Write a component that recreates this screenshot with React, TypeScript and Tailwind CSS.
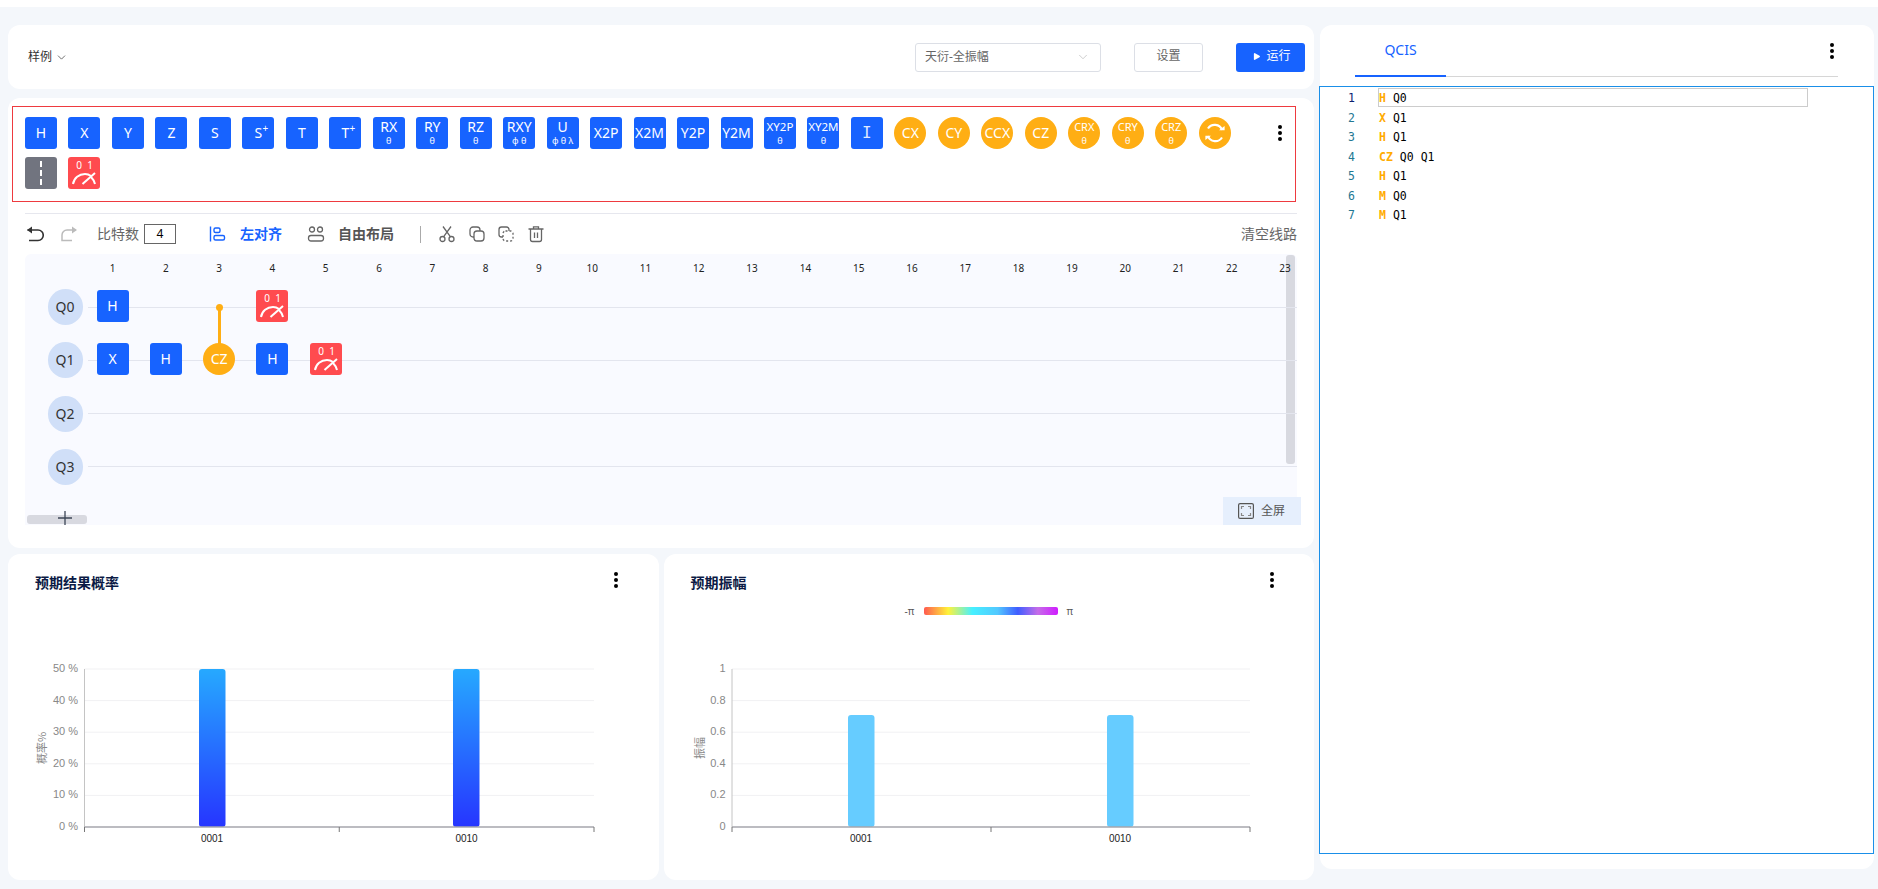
import { ChevronDown, Play } from "lucide-react"

const FONT = `font-["Noto_Sans","Noto_Sans_CJK_SC",sans-serif]`

const Kebab = () => (
    <div className="flex flex-col items-center gap-[2px] w-[5px]">
        <span className="w-1 h-1 rounded-full bg-black"></span>
        <span className="w-1 h-1 rounded-full bg-black"></span>
        <span className="w-1 h-1 rounded-full bg-black"></span>
    </div>
)

const Meter = () => (
    <svg width="32" height="32" viewBox="0 0 32 32" fill="none" stroke="#fff" strokeWidth="2">
        <text x="11" y="12" fontSize="10" fill="#fff" stroke="none" textAnchor="middle" fontFamily="Noto Sans">0</text>
        <text x="22" y="12" fontSize="10" fill="#fff" stroke="none" textAnchor="middle" fontFamily="Noto Sans">1</text>
        <path d="M5 27C6 21 11 17 17 17c2 0 4 .5 6 2" />
        <path d="M27 27c-.6-2.500-2-5-4-7" />
        <path d="M14.500 27L27 16" />
    </svg>
)

const Refresh = () => (
    <svg width="22" height="22" viewBox="0 0 22 22" fill="none" stroke="#fff" strokeWidth="2.2">
        <path d="M4 6.500C6 3.500 9 2.600 11.500 2.900c3 .3 5.500 2.200 6.500 5.100" />
        <path d="M15 8.200h5.600V4z" fill="#fff" stroke="none" />
        <path d="M18 15.500c-2 3-5 3.900-7.500 3.600-3-.3-5.500-2.200-6.500-5.100" />
        <path d="M7 13.800H1.400V18z" fill="#fff" stroke="none" />
    </svg>
)

type Gate = {
    label: string
    sub?: string
    sup?: boolean
    size?: string
}

const BLUE_GATES: Gate[] = [
    { label: "H" },
    { label: "X" },
    { label: "Y" },
    { label: "Z" },
    { label: "S" },
    { label: "S", sup: true },
    { label: "T" },
    { label: "T", sup: true },
    { label: "RX", sub: "θ" },
    { label: "RY", sub: "θ" },
    { label: "RZ", sub: "θ" },
    { label: "RXY", sub: "φ θ" },
    { label: "U", sub: "φ θ λ" },
    { label: "X2P" },
    { label: "X2M" },
    { label: "Y2P" },
    { label: "Y2M" },
    { label: "XY2P", sub: "θ", size: "text-[11.5px]" },
    { label: "XY2M", sub: "θ", size: "text-[11.5px]" },
]

const AMBER_GATES: Gate[] = [
    { label: "CX" },
    { label: "CY" },
    { label: "CCX" },
    { label: "CZ" },
    { label: "CRX", sub: "θ", size: "text-[11px]" },
    { label: "CRY", sub: "θ", size: "text-[11px]" },
    { label: "CRZ", sub: "θ", size: "text-[11px]" },
]

const GateInner = ({ gate }: { gate: Gate }) => (
    <div className="flex flex-col items-center justify-center leading-none text-white relative">
        <span className={`${gate.size || "text-sm"} leading-[14px] whitespace-nowrap`}>{gate.label}</span>
        {gate.sup && <span className="absolute -top-[3px] -right-[6px] text-[10px] leading-[10px]">+</span>}
        {gate.sub && <span className="text-[9px] leading-[10px] mt-[2px] whitespace-nowrap">{gate.sub}</span>}
    </div>
)

const SquareGate = ({ gate }: { gate: Gate }) => (
    <div className="w-8 h-8 shrink-0 rounded-[3px] bg-[#1763ff] flex items-center justify-center">
        <GateInner gate={gate} />
    </div>
)

const RoundGate = ({ gate }: { gate: Gate }) => (
    <div className="w-8 h-8 shrink-0 rounded-full bg-[#ffae14] flex items-center justify-center">
        <GateInner gate={gate} />
    </div>
)

const MeterGate = () => (
    <div className="w-8 h-8 shrink-0 rounded-[3px] bg-[#ff4b4f]">
        <Meter />
    </div>
)

const GatePalette = () => (
    <div className="relative mt-2 ml-1 w-[1284px] h-[96px] border border-[#ee3a3f] pt-[10px] pl-3 flex flex-col gap-2">
        <div className="flex gap-[11.48px]">
            {BLUE_GATES.map((g, i) => (
                <SquareGate key={i} gate={g} />
            ))}
            <div className="w-8 h-8 shrink-0 rounded-[3px] bg-[#1763ff] flex items-center justify-center font-['DejaVu_Sans_Mono',monospace] text-base text-[#dfe8ff]">I</div>
            {AMBER_GATES.map((g, i) => (
                <RoundGate key={i} gate={g} />
            ))}
            <div className="w-8 h-8 shrink-0 rounded-full bg-[#ffae14] flex items-center justify-center">
                <Refresh />
            </div>
        </div>
        <div className="flex gap-[11.48px]">
            <div className="w-8 h-8 rounded-[3px] bg-[#71747f] flex items-center justify-center">
                <div className="h-[24px] border-l-2 border-dashed border-white"></div>
            </div>
            <MeterGate />
        </div>
        <div className="absolute top-[18px] right-[13px]">
            <Kebab />
        </div>
    </div>
)

const Icon = ({ children }: { children: React.ReactNode }) => (
    <svg width="18" height="18" viewBox="0 0 18 18" fill="none" stroke="#666" strokeWidth="1.3">
        {children}
    </svg>
)

const Toolbar = () => (
    <div className="flex items-center h-[41px] mx-[17px] border-t-[1px] border-[#e6e7ee] mt-[11px] text-sm">
        <svg width="18" height="18" viewBox="0 0 18 18" fill="none" stroke="#333" strokeWidth="1.6" className="ml-[1px]">
            <path d="M1.500 5h10.500a4.500 4.500 0 0 1 0 10.500H3" />
            <path d="M1 5l5-3.500v7z" fill="#333" stroke="none" />
        </svg>
        <svg width="18" height="18" viewBox="0 0 18 18" fill="none" stroke="#bbb" strokeWidth="1.5" className="ml-4">
            <path d="M16 5H7a5 5 0 0 0-5 5v5.500h10" />
            <path d="M17 5l-5-3.500v7z" fill="#bbb" stroke="none" />
        </svg>
        <span className="ml-[19px] text-[#666]">比特数</span>
        <div className="ml-[5px] w-[32px] h-[20px] border border-[#666] flex items-center justify-center text-xs text-black">4</div>
        <svg width="17" height="18" viewBox="0 0 17 18" fill="none" stroke="#1763ff" strokeWidth="1.4" className="ml-[33px]">
            <path d="M1.500 1.500v15" />
            <rect x="5" y="3" width="6" height="4.500" rx="1.500" />
            <rect x="5" y="10.500" width="10.500" height="4.500" rx="1.500" />
        </svg>
        <span className="ml-[14px] font-bold text-[#1763ff]">左对齐</span>
        <svg width="18" height="18" viewBox="0 0 18 18" fill="none" stroke="#666" strokeWidth="1.3" className="ml-[25px]">
            <circle cx="5" cy="4.500" r="2.500" />
            <circle cx="13" cy="4.500" r="2.500" />
            <rect x="1.500" y="10.500" width="15" height="5.500" rx="2.500" />
        </svg>
        <span className="ml-[13px] font-bold text-[#555]">自由布局</span>
        <div className="ml-[26px] w-px h-[17px] bg-[#aaa]"></div>
        <div className="ml-[17px] flex items-center gap-[11.5px]">
            <Icon>
                <circle cx="4.500" cy="14" r="2.500" />
                <circle cx="13.500" cy="14" r="2.500" />
                <path d="M5.500 11.800L13 1.500M12.500 11.800L5 1.500" />
            </Icon>
            <Icon>
                <rect x="2" y="2" width="10" height="10" rx="3" />
                <rect x="6" y="6" width="10" height="10" rx="3" fill="#fff" />
            </Icon>
            <Icon>
                <path d="M6 12H4.500A2.500 2.500 0 0 1 2 9.500v-5A2.500 2.500 0 0 1 4.500 2h5A2.500 2.500 0 0 1 12 4.500V6" />
                <rect x="6" y="6" width="10" height="10" rx="2.500" strokeDasharray="2 2" />
            </Icon>
            <Icon>
                <path d="M1.500 4h15M6.500 4V1.800h5V4" />
                <path d="M3.500 4v10.500a2 2 0 0 0 2 2h7a2 2 0 0 0 2-2V4" />
                <path d="M7.500 7.500v5.500M10.500 7.500v5.500" />
            </Icon>
        </div>
        <span className="ml-auto text-[#666]">清空线路</span>
    </div>
)

const COLS = Array.from({ length: 23 }, (_, i) => i + 1)
const QUBITS = ["Q0", "Q1", "Q2", "Q3"]

// column / row position on the circuit canvas
const colX = (c: number) => 71.5 + (c - 1) * 53.3
const rowY = (r: number) => 36 + r * 53.3

const Placed = ({ c, r, children }: { c: number; r: number; children: React.ReactNode }) => (
    <div className="absolute" style={{ left: colX(c), top: rowY(r) }}>
        {children}
    </div>
)

const Circuit = () => (
    <div className="relative mx-[17px] h-[271px] bg-[#f9faff] rounded-t-[6px]">
        {/* scrollbars */}
        <div className="absolute right-[2px] top-px w-[9px] h-[209px] rounded-[3px] bg-[#d8d9e0]"></div>
        <div className="absolute left-[2px] bottom-px w-[60px] h-[9px] rounded-[3px] bg-[#d8d9e0]"></div>
        <svg width="14" height="14" viewBox="0 0 14 14" className="absolute left-[33px] bottom-0" stroke="#3c4556" strokeWidth="1.3">
            <path d="M7 0v14M0 7h14" />
        </svg>

        <div className="absolute left-0 top-0 right-0 h-[28px]">
            {COLS.map((n) => (
                <span
                    key={n}
                    className="absolute w-6 -ml-3 text-center top-[6px] text-[10px] leading-[16px] text-[#222]"
                    style={{ left: colX(n) + 16 }}
                >
                    {n}
                </span>
            ))}
        </div>
        {QUBITS.map((q, i) => (
            <div key={q} className="absolute left-[22.5px] right-0 flex items-center" style={{ top: rowY(i) - 1 }}>
                <div className="w-[35px] h-9 rounded-full bg-[#d0dff8] flex items-center justify-center text-sm text-[#333]">{q}</div>
                <div className="ml-[5px] flex-1 h-px bg-[#e3e5ee]"></div>
            </div>
        ))}
        <div className="absolute w-[3px] bg-[#ffae14]" style={{ left: colX(3) + 14.5, top: 53, height: 50 }}></div>
        <div className="absolute w-[7px] h-[7px] rounded-full bg-[#ffae14]" style={{ left: colX(3) + 12.5, top: 49.5 }}></div>
        <Placed c={1} r={0}><SquareGate gate={{ label: "H" }} /></Placed>
        <Placed c={4} r={0}><MeterGate /></Placed>
        <Placed c={1} r={1}><SquareGate gate={{ label: "X" }} /></Placed>
        <Placed c={2} r={1}><SquareGate gate={{ label: "H" }} /></Placed>
        <Placed c={3} r={1}><RoundGate gate={{ label: "CZ" }} /></Placed>
        <Placed c={4} r={1}><SquareGate gate={{ label: "H" }} /></Placed>
        <Placed c={5} r={1}><MeterGate /></Placed>

        <div className="absolute right-[-4px] bottom-0 w-[78px] h-[28px] bg-[#e6effd] flex items-center pl-[15px] gap-[7px] text-xs text-[#555]">
            <svg width="16" height="16" viewBox="0 0 16 16" fill="none" stroke="#555" strokeWidth="1.2">
                <rect x="0.6" y="0.6" width="14.8" height="14.8" rx="1.5" />
                <path d="M3.500 6V3.500H6M10 3.500h2.500V6M12.500 10v2.500H10M6 12.500H3.500V10" stroke="#888" />
            </svg>
            全屏
        </div>
    </div>
)

const Bars = ({
    ticks,
    label,
    labelX,
    left,
    bars,
    barTop,
    fill,
    gradientId,
    centers,
    width,
}: {
    ticks: string[]
    label: string
    labelX: number
    left: number
    bars: number[]
    barTop: number
    fill: string
    gradientId?: string
    centers: number[]
    width: number
}) => {
    const top = 115
    const bottom = 273
    const step = (bottom - top) / (ticks.length - 1)
    return (
        <svg width="651" height="326" className="absolute left-0 top-0" fontFamily="Liberation Sans, Arial, sans-serif">
            {gradientId && (
                <defs>
                    <linearGradient id={gradientId} x1="0" y1="0" x2="0" y2="1">
                        <stop offset="0" stopColor="#26a9ff" />
                        <stop offset="1" stopColor="#2635ff" />
                    </linearGradient>
                </defs>
            )}
            {ticks.map((t, i) => {
                const y = bottom - i * step
                return (
                    <g key={t}>
                        {i > 0 && <line x1={left} x2={left + width} y1={y} y2={y} stroke="#f1f1f3" />}
                        <text x={left - 6.5} y={y + 3} textAnchor="end" fontSize="11" fill="#888">
                            {t}
                        </text>
                    </g>
                )
            })}
            <line x1={left} x2={left} y1={top} y2={bottom} stroke="#c4c4c4" />
            <text
                transform={`translate(${labelX},194) rotate(-90)`}
                textAnchor="middle"
                fontSize="11"
                fill="#888"
                fontFamily="Noto Sans CJK SC, sans-serif"
            >
                {label}
            </text>
            {bars.map((x) => (
                <rect
                    key={x}
                    x={x}
                    y={barTop}
                    width="26.5"
                    height={bottom - barTop}
                    rx="3"
                    fill={gradientId ? `url(#${gradientId})` : fill}
                />
            ))}
            <line x1={left} x2={left + width} y1={bottom} y2={bottom} stroke="#a6a6ad" strokeWidth="1.5" />
            {[0, 0.5, 1].map((k) => (
                <line key={k} x1={left + k * width} x2={left + k * width} y1={bottom} y2={bottom + 5} stroke="#777" />
            ))}
            {centers.map((c, i) => (
                <text key={c} x={c} y={288} textAnchor="middle" fontSize="10" fill="#222">
                    {i === 0 ? "0001" : "0010"}
                </text>
            ))}
        </svg>
    )
}

const ChartCard = ({ title, children }: { title: string; children: React.ReactNode }) => (
    <div className="relative flex-1 bg-white rounded-xl">
        <div className="relative z-10 flex justify-between pt-[18px] pl-[27px] pr-10">
            <h3 className="text-sm leading-[22px] font-bold text-[#0b1a45]">{title}</h3>
            <Kebab />
        </div>
        {children}
    </div>
)

const QCIS = [
    ["H", "Q0"],
    ["X", "Q1"],
    ["H", "Q1"],
    ["CZ", "Q0 Q1"],
    ["H", "Q1"],
    ["M", "Q0"],
    ["M", "Q1"],
]

const App = () => {
    return (
        <div className={`w-[1878px] h-[889px] overflow-hidden bg-[#f4f7fb] flex flex-col ${FONT}`}>
            <div className="h-[7px] bg-white shrink-0"></div>
            <div className="flex pt-[18px] pl-2">
                <div className="w-[1306px] flex flex-col">
                    {/* header */}
                    <div className="h-16 bg-white rounded-xl flex items-center pl-5 pr-[9px] text-xs">
                        <span className="text-[#333]">样例</span>
                        <ChevronDown size={13} strokeWidth={1.4} className="ml-[3px] text-[#444]" />
                        <div className="ml-auto w-[186px] h-[29px] border border-[#dcdfe6] rounded-[3px] flex items-center pl-[9px] pr-[10px] text-[#666]">
                            天衍-全振幅
                            <ChevronDown size={14} strokeWidth={1} className="ml-auto text-[#aaa]" />
                        </div>
                        <div className="ml-[33px] w-[69px] h-[29px] pb-[2px] border border-[#dcdfe6] rounded-[3px] flex items-center justify-center text-[#666]">设置</div>
                        <div className="ml-[33px] w-[69px] h-[29px] pb-[2px] pl-[2px] rounded-[3px] bg-[#1763ff] text-white flex items-center justify-center gap-[5px]">
                            <Play size={9} fill="#fff" strokeWidth={0} />
                            运行
                        </div>
                    </div>

                    {/* circuit */}
                    <div className="mt-[9px] h-[450px] bg-white rounded-xl overflow-hidden">
                        <GatePalette />
                        <Toolbar />
                        <Circuit />
                    </div>

                    {/* charts */}
                    <div className="mt-[6px] h-[326px] flex gap-[5px]">
                        <ChartCard title="预期结果概率">
                            <Bars
                                ticks={["0 %", "10 %", "20 %", "30 %", "40 %", "50 %"]}
                                label="概率%"
                                labelX={38}
                                left={76.5}
                                width={509.5}
                                bars={[191, 445]}
                                barTop={115}
                                fill="#26a9ff"
                                gradientId="probBar"
                                centers={[204, 458.5]}
                            />
                        </ChartCard>
                        <ChartCard title="预期振幅">
                            <div className="absolute top-[50px] left-[241px] flex items-center text-[10px] leading-[14px] text-[#555]">
                                <span className="w-[19px]">-π</span>
                                <div className="w-[134px] h-2 rounded-[2px] bg-[linear-gradient(90deg,#ff5a4f,#fff23a_18%,#46f0ff_36%,#52c8ff_55%,#3f5dff_70%,#c56ce8_85%,#d01cff)]"></div>
                                <span className="ml-[9px]">π</span>
                            </div>
                            <Bars
                                ticks={["0", "0.2", "0.4", "0.6", "0.8", "1"]}
                                label="振幅"
                                labelX={40}
                                left={68}
                                width={518}
                                bars={[184, 443]}
                                barTop={161}
                                fill="#66ccff"
                                centers={[197, 456]}
                            />
                        </ChartCard>
                    </div>
                </div>

                {/* qcis panel */}
                <div className="ml-[6px] w-[554px] h-[844px] bg-white rounded-xl flex flex-col">
                    <div className="h-[61px] shrink-0 flex pl-[35px] pr-9">
                        <div className="flex-1 border-b border-[#d6d6d6] h-[52px] flex justify-between">
                            <div className="w-[91px] h-[52px] border-b-2 border-[#1763ff] flex justify-center pt-[15px] text-sm leading-5 text-[#1763ff] -mb-px">QCIS</div>
                            <div className="pt-[18px] mr-1">
                                <Kebab />
                            </div>
                        </div>
                    </div>
                    <div className="-ml-px h-[768px] border border-[#1a8fe8] bg-white relative font-['DejaVu_Sans_Mono',monospace] text-[11.5px] leading-[19.5px] pt-[2px]">
                        <div className="absolute left-[58px] top-[1px] w-[430px] h-[19px] border border-[#cccccc]"></div>
                        {QCIS.map(([op, args], i) => (
                            <div key={i} className="flex">
                                <span className={`w-[35px] text-right ${i === 0 ? "text-[#0b216f]" : "text-[#237893]"}`}>{i + 1}</span>
                                <span className="ml-6 font-bold text-[#ffab00]">{op}</span>
                                <span className="ml-[7px] text-black">{args}</span>
                            </div>
                        ))}
                    </div>
                </div>
            </div>
        </div>
    )
}

export default App
